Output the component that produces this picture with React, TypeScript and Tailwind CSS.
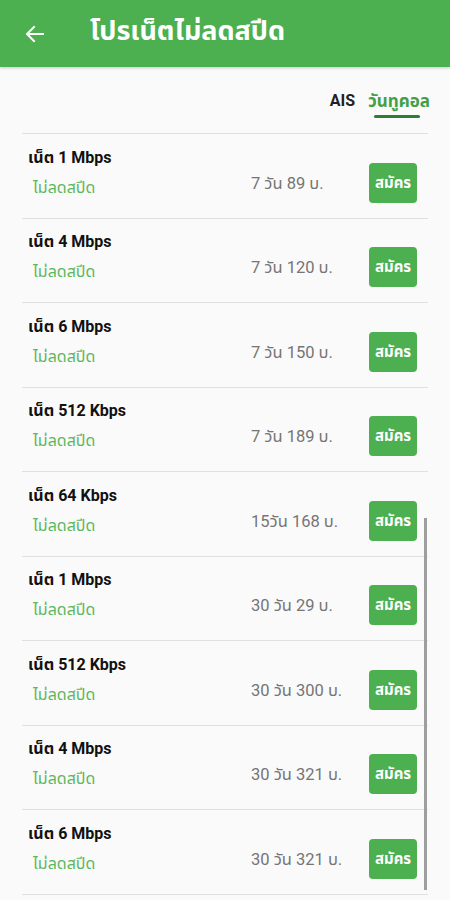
import React from 'react';

const PROMOS = [
  { speed: '1 Mbps', days: '7 วัน', price: '89 บ.' },
  { speed: '4 Mbps', days: '7 วัน', price: '120 บ.' },
  { speed: '6 Mbps', days: '7 วัน', price: '150 บ.' },
  { speed: '512 Kbps', days: '7 วัน', price: '189 บ.' },
  { speed: '64 Kbps', days: '15วัน', price: '168 บ.' },
  { speed: '1 Mbps', days: '30 วัน', price: '29 บ.' },
  { speed: '512 Kbps', days: '30 วัน', price: '300 บ.' },
  { speed: '4 Mbps', days: '30 วัน', price: '321 บ.' },
  { speed: '6 Mbps', days: '30 วัน', price: '321 บ.' },
];

export default function App() {
  return (
    <div
      className="relative w-[450px] h-[900px] overflow-hidden bg-[#fafafa]"
      style={{ fontFamily: 'Roboto, "Noto Sans", "Noto Sans Thai", "DejaVu Sans", sans-serif' }}
    >
      {/* app bar */}
      <div className="h-[67px] bg-[#4caf50] flex items-center px-[23px] shadow-[0_1px_3px_rgba(0,0,0,0.2)]">
        <svg width="24" height="24" viewBox="0 0 24 24" fill="none" stroke="white" strokeWidth="2" strokeLinecap="square">
          <path d="M20 12H5" />
          <path d="M11 5l-7 7 7 7" />
        </svg>
        <h1 className="ml-[43px] text-white text-[27px] font-bold leading-none pb-[4px]">โปรเน็ตไม่ลดสปีด</h1>
      </div>

      {/* tabs */}
      <div className="flex justify-end items-start gap-[13px] pr-[20px] pt-[23px] h-[66px]">
        <span className="text-[16px] font-bold text-[#222] leading-[22px]">AIS</span>
        <div className="flex flex-col items-center">
          <span className="text-[17px] font-bold text-[#43a047] leading-[22px]">วันทูคอล</span>
          <span className="mt-[3px] mr-[4px] h-[3px] w-[46px] rounded-full bg-[#2e7d32]" />
        </div>
      </div>

      {/* list */}
      <div className="mx-[22px] border-t border-[#e0e0e0]">
        {PROMOS.map((p, i) => (
          <div key={i} className="h-[84.5px] border-b border-[#e0e0e0] flex items-center">
            <div className="flex-1 pl-[6px] pb-[6px]">
              <div className="text-[16px] font-bold text-[#111] leading-[20px]">เน็ต {p.speed}</div>
              <div className="mt-[10px] pl-[5px] text-[16px] text-[#5cb85c] leading-[20px]">ไม่ลดสปีด</div>
            </div>
            <div className="w-[118px] pt-[16px] text-[16.5px] text-[#757575] leading-[20px]">
              {p.days} {p.price}
            </div>
            <button className="mr-[11px] mt-[14px] w-[48px] h-[40px] rounded-[4px] bg-[#4caf50] text-white text-[15px] font-bold">
              สมัคร
            </button>
          </div>
        ))}
      </div>

      {/* scrollbar */}
      <div className="absolute left-[424px] top-[518px] w-[3px] h-[372px] bg-[#9e9e9e]" />
    </div>
  );
}
